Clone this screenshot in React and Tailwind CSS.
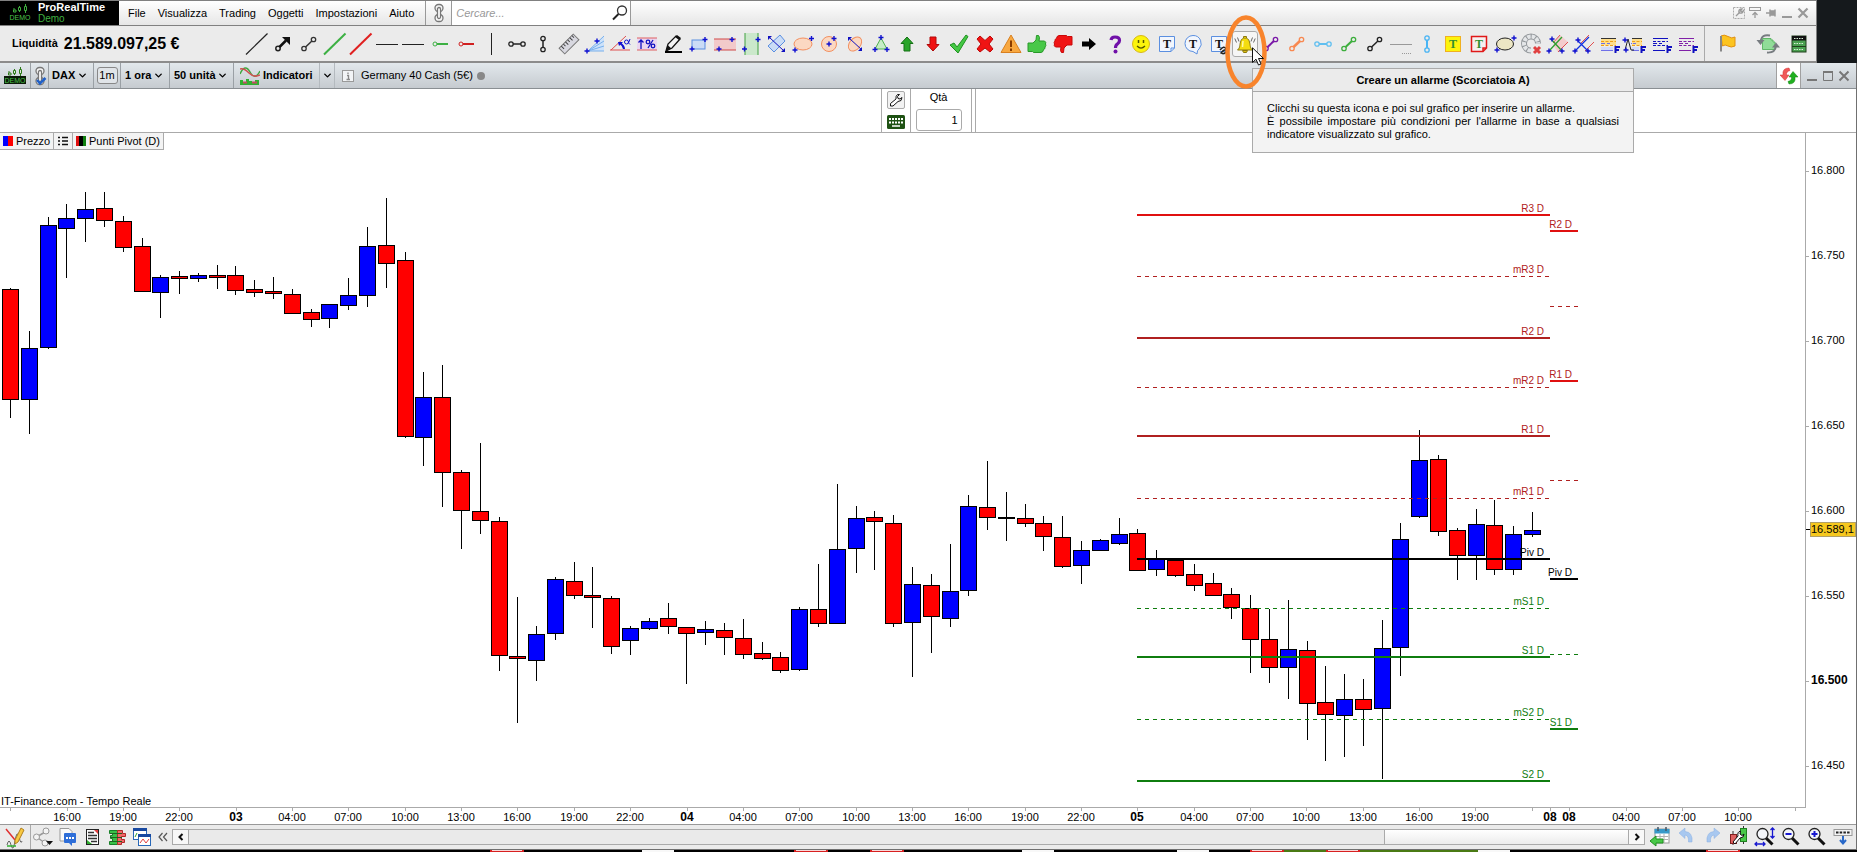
import { useState } from 'react';
import { ChevronDown } from 'lucide-react';

// [color, body top, body bottom, high, low] - one row per hour, in plot units
const candles = [
    ['R', 289, 400, 288, 418], ['B', 348, 400, 331, 434], ['B', 225, 348, 217, 349], ['B', 218, 229, 204, 278],
    ['B', 209, 219, 192, 242], ['R', 208, 221, 192, 227], ['R', 221, 248, 216, 252], ['R', 246, 292, 238, 292],
    ['B', 277, 293, 275, 318], ['R', 276, 279, 271, 294], ['B', 275, 279, 273, 282], ['R', 275, 278, 265, 289],
    ['R', 275, 291, 266, 295], ['R', 289, 293, 280, 297], ['R', 291, 294, 277, 299], ['R', 294, 314, 289, 314],
    ['R', 312, 320, 309, 327], ['B', 304, 319, 304, 328], ['B', 295, 306, 278, 310], ['B', 246, 296, 227, 307],
    ['R', 245, 264, 198, 288], ['R', 260, 437, 252, 438], ['B', 397, 438, 372, 466], ['R', 397, 473, 365, 507],
    ['R', 472, 511, 470, 549], ['R', 511, 521, 443, 534], ['R', 521, 656, 517, 671], ['R', 656, 659, 597, 723],
    ['B', 634, 661, 626, 681], ['B', 579, 634, 577, 640], ['R', 581, 596, 562, 599], ['R', 595, 598, 567, 628],
    ['R', 598, 647, 596, 654], ['B', 628, 641, 626, 655], ['B', 621, 629, 618, 630], ['R', 618, 627, 603, 634],
    ['R', 627, 634, 627, 684], ['B', 629, 633, 621, 645], ['R', 630, 638, 623, 655], ['R', 638, 655, 619, 659],
    ['R', 653, 659, 642, 660], ['R', 657, 671, 652, 673], ['B', 609, 670, 607, 671], ['R', 609, 624, 564, 627],
    ['B', 549, 624, 484, 624], ['B', 518, 549, 506, 573], ['R', 517, 522, 511, 570], ['R', 523, 624, 515, 627],
    ['B', 584, 623, 567, 677], ['R', 585, 617, 574, 653], ['B', 591, 619, 544, 627], ['B', 506, 591, 495, 596],
    ['R', 507, 518, 461, 530], ['R', 517, 518, 492, 541], ['R', 518, 524, 504, 527], ['R', 523, 537, 516, 551],
    ['R', 537, 567, 516, 568], ['B', 550, 566, 541, 584], ['B', 540, 551, 539, 551], ['B', 534, 544, 518, 545],
    ['R', 533, 571, 529, 571], ['B', 559, 570, 550, 576], ['R', 560, 576, 560, 577], ['R', 574, 586, 564, 591],
    ['R', 583, 596, 573, 596], ['R', 594, 608, 588, 619], ['R', 608, 640, 595, 673], ['R', 639, 668, 609, 683],
    ['B', 649, 668, 600, 699], ['R', 650, 704, 641, 740], ['R', 702, 715, 666, 761], ['B', 699, 716, 674, 757],
    ['R', 699, 710, 679, 746], ['B', 648, 709, 620, 779], ['B', 539, 648, 523, 676], ['B', 460, 517, 430, 518],
    ['R', 459, 532, 455, 536], ['R', 530, 556, 528, 580], ['B', 524, 556, 509, 580], ['R', 525, 570, 500, 575],
    ['B', 534, 570, 526, 575], ['B', 530, 535, 512, 537],
];

const RED = '#e01010';
const DARK_RED = '#b02020';
const GREEN = '#0f7d0f';

const pivots = [
    { y: 215, label: 'R3 D', color: RED, text: DARK_RED },
    { y: 276, label: 'mR3 D', color: DARK_RED, dashed: true },
    { y: 338, label: 'R2 D', color: DARK_RED },
    { y: 387, label: 'mR2 D', color: DARK_RED, dashed: true },
    { y: 436, label: 'R1 D', color: DARK_RED },
    { y: 498, label: 'mR1 D', color: DARK_RED, dashed: true },
    { y: 559, label: 'Piv D', color: '#000000' },
    { y: 608, label: 'mS1 D', color: GREEN, dashed: true },
    { y: 657, label: 'S1 D', color: GREEN },
    { y: 719, label: 'mS2 D', color: GREEN, dashed: true },
    { y: 781, label: 'S2 D', color: GREEN },
];

const nextPivots = [
    { y: 231, label: 'R2 D', color: RED, text: DARK_RED },
    { y: 306, color: DARK_RED, dashed: true },
    { y: 381, label: 'R1 D', color: RED, text: DARK_RED },
    { y: 480, color: DARK_RED, dashed: true },
    { y: 579, label: 'Piv D', color: '#000000' },
    { y: 654, color: GREEN, dashed: true },
    { y: 729, label: 'S1 D', color: GREEN },
];

const prices = [
    [171, '16.800'], [256, '16.750'], [341, '16.700'], [426, '16.650'],
    [511, '16.600'], [596, '16.550'], [681, '16.500'], [766, '16.450'],
];

const times = [
    [10, ''], [67, '16:00'], [123, '19:00'], [179, '22:00'], [236, '03'], [292, '04:00'], [348, '07:00'],
    [405, '10:00'], [461, '13:00'], [517, '16:00'], [574, '19:00'], [630, '22:00'], [687, '04'], [743, '04:00'],
    [799, '07:00'], [856, '10:00'], [912, '13:00'], [968, '16:00'], [1025, '19:00'], [1081, '22:00'],
    [1137, '05'], [1194, '04:00'], [1250, '07:00'], [1306, '10:00'], [1363, '13:00'], [1419, '16:00'],
    [1475, '19:00'], [1532, ''], [1550, '08'], [1569, '08'], [1626, '04:00'], [1682, '07:00'], [1738, '10:00'],
    [1795, ''],
];

function Icon({ size = 26, children }) {
    return (
        <svg width={size} height={size} viewBox={`0 0 ${size} ${size}`} fill="none" className="block shrink-0" aria-hidden="true">
            {children}
        </svg>
    );
}

// little blue cross used as anchor point by the drawing tools
function Plus({ x, y }) {
    return <path d={`M${x - 2.5} ${y}H${x + 2.5}M${x} ${y - 2.5}V${y + 2.5}`} stroke="#1010d0" strokeWidth="1.4" />;
}

function Segment({ color, x1 = 8, y1 = 17.5, x2 = 17.5, y2 = 8.5, w = 1.5 }) {
    return (
        <g stroke={color}>
            <path d={`M${x1} ${y1}L${x2} ${y2}`} strokeWidth={w} />
            <circle cx={x1} cy={y1} r="2.2" fill="#ebebeb" strokeWidth="1.3" />
            <circle cx={x2} cy={y2} r="2.2" fill="#ebebeb" strokeWidth="1.3" />
        </g>
    );
}

function FibLines({ top, mid, bottom, dash, x = 5 }) {
    return (
        <>
            {mid && <rect x={x} y="8" width={20 - x} height="6" fill="#ffdf8c" />}
            {mid && <rect x={x} y="16" width={17 - x} height="3" fill="#d4dcfa" />}
            <path d={`M${x} 7.5H20`} stroke={top} />
            <path d={`M${x} 10.5H20M${x} 14.500H20`} stroke={dash} strokeDasharray="3 1.5" />
            <path d={`M${x} 12.500H9M11 12.500H14M${x} 19.500H17`} stroke={bottom} />
            <path d="M19.500 22V16H24M19.500 19H23" stroke="#1010c0" strokeWidth="2" />
        </>
    );
}

const bell = (
    <>
        <path d="M5.500 19C8.500 16.500 7.500 14 8.500 11C9.200 8 11 7 13 7S16.800 8 17.500 11C18.500 14 17.500 16.500 20.500 19Z" fill="#f4dc10" stroke="#8c7a10" />
        <path d="M11.500 7V5.500H14.500V7M10.500 19.500H15.500L14.500 21.500H11.500Z" fill="#e0c010" stroke="#8c7a10" />
        <path d="M11 10L10.500 16" stroke="#fffaa8" strokeWidth="1.500" />
        <path d="M5.500 6.500L7 10.500M2.800 7.500L4.500 11.500M20.500 6.500L19 10.500M23.200 7.500L21.500 11.500" stroke="#666666" />
    </>
);

const thumb = 'M4 12H9L12 9L12.500 4.500Q15 3.500 15.500 6.500L15 10H20.500Q22.500 11 21.500 13Q22.500 14.500 21 16Q21.500 18 19.500 18.500Q19.500 21 17 21.500H9.500L8.500 20.500H4Z';

const tools = [
    ['Linea', <path d="M2 23.500L23.500 2.500" stroke="#222222" strokeWidth="1.200" />],
    ['Freccia', <><circle cx="8" cy="17.500" r="2.200" stroke="#222222" strokeWidth="1.500" /><path d="M9.500 16L16 9.500" stroke="#111111" strokeWidth="2.500" /><path d="M12 6H20V14Z" fill="#111111" /></>],
    ['Segmento', <Segment color="#333333" />],
    ['Trend rialzista', <path d="M2 23.500L23.500 2.500" stroke="#3cb043" strokeWidth="2" />],
    ['Trend ribassista', <path d="M2 23.500L23.500 2.500" stroke="#e02020" strokeWidth="2" />],
    ['Orizzontale', <path d="M2 13.500H24" stroke="#222222" />],
    ['Orizzontale estesa', <path d="M2 13.500H24" stroke="#222222" />],
    ['Semiretta verde', <><path d="M10 13H22" stroke="#3cb043" strokeWidth="2" /><circle cx="9" cy="13" r="2" stroke="#3cb043" fill="#ebebeb" /></>],
    ['Semiretta rossa', <><path d="M10 13H22" stroke="#d02020" strokeWidth="2" /><circle cx="9" cy="13" r="2" stroke="#d02020" fill="#ebebeb" /></>],
    ['Verticale', <path d="M13.500 2V24" stroke="#222222" />],
    ['Segmento orizzontale', <Segment color="#222222" x1={7} y1={13} x2={19} y2={13} />],
    ['Segmento verticale', <Segment color="#222222" x1={13} y1={7.500} x2={13} y2={18.500} />],
    ['Righello', <g transform="rotate(-45 13 13)"><rect x="3" y="9" width="20" height="8" fill="#d8d8e0" stroke="#777777" /><path d="M6 9V13M9 9V12M12 9V13M15 9V12M18 9V13M21 9V12" stroke="#444444" /></g>],
    ['Ventaglio', <><path d="M6 20L22 5V20Z" fill="#cde2fa" /><path d="M6 20L22 5M6 20L22 10M6 20L22 15M6 20H22" stroke="#78b0ec" /><Plus x={5} y={20} /><Plus x={15} y={10} /></>],
    ['Angolo', <><path d="M2 19H22M3 19L18 5" stroke="#e05050" /><path d="M16 18Q16 15 12 12" stroke="#1010d0" strokeWidth="2" /><path d="M10 11H15L11 15Z" fill="#1010d0" /><circle cx="18.500" cy="11" r="2" stroke="#1010d0" /><path d="M22 8L20.500 12L22 13.500" stroke="#1010d0" /></>],
    ['Percentuale', <><rect x="3" y="7" width="20" height="12" fill="#e9d5ef" /><path d="M3 7H23M3 19H23" stroke="#e06060" /><path d="M7 18V9M4.500 11.500L7 9L9.500 11.500" stroke="#1010c0" strokeWidth="1.300" /><circle cx="14" cy="11" r="1.800" stroke="#1010c0" strokeWidth="1.300" /><circle cx="19" cy="15" r="1.800" stroke="#1010c0" strokeWidth="1.300" /><path d="M19 9L14 17" stroke="#1010c0" strokeWidth="1.300" /></>],
    ['Matita', <><path d="M6 20L8 13L16 5L20 8L12 17Z" fill="#f4f4f4" stroke="#111111" strokeWidth="1.300" /><path d="M6 20L7.500 14L11.500 17.500ZM15 6L17 4L21 7L19 9Z" fill="#111111" /><path d="M5 21H22" stroke="#000000" strokeWidth="2" /></>],
    ['Rettangolo', <><rect x="6" y="9" width="13" height="9" fill="#cadcf6" stroke="#5b8fe0" /><Plus x={6} y={18} /><Plus x={19} y={8.500} /></>],
    ['Fascia orizzontale', <><rect x="2" y="8" width="22" height="11" fill="#f2caca" /><path d="M2 8H24M2 19H24" stroke="#d04848" /><Plus x={7} y={18} /><Plus x={20} y={8.500} /></>],
    ['Fascia verticale', <><rect x="7" y="2" width="13" height="22" fill="#cbe8cb" /><path d="M7 2V24M20 2V24" stroke="#40a040" /><Plus x={6.500} y={18} /><Plus x={20} y={8.500} /></>],
    ['Rettangolo inclinato', <><path d="M4 15L16 4L21 10L10 21Z" fill="#cadcf6" stroke="#5b8fe0" /><path d="M5 6L20 20" stroke="#1010c0" /><path d="M4 5H8L4 9ZM21 21H17L21 17Z" fill="#1010c0" /></>],
    ['Ellisse', <><ellipse cx="13" cy="13" rx="9" ry="6" fill="#fbd8c2" stroke="#f29060" /><Plus x={5} y={19} /><Plus x={21.500} y={7.500} /></>],
    ['Cerchio', <><circle cx="13" cy="13" r="7.500" fill="#fbd8c2" stroke="#f29060" /><Plus x={13} y={13} /><Plus x={18} y={7.500} /></>],
    ['Ellisse inclinata', <><ellipse cx="13" cy="13" rx="5.500" ry="8" transform="rotate(40 13 13)" fill="#fbd8c2" stroke="#f29060" /><path d="M7 7L20 19" stroke="#1010c0" /><path d="M6 6H10L6 10ZM20 20H16L20 16Z" fill="#1010c0" /></>],
    ['Triangolo', <><path d="M13 7L19 18H7Z" fill="#c6ecc6" stroke="#50b050" /><Plus x={13} y={6.500} /><Plus x={7} y={18.500} /><Plus x={19} y={18.500} /></>],
    ['Freccia su', <path d="M13 6L19 12.500H16V20H10V12.500H7Z" fill="#2aa52a" stroke="#147014" />],
    ['Freccia giù', <path d="M13 20L19 13.500H16V6H10V13.500H7Z" fill="#f01010" stroke="#b00808" />],
    ['Spunta', <path d="M4 14L8 12L11 16L20 4L22 5.500L12 22Z" fill="#44c844" stroke="#209020" />],
    ['Croce', <path d="M5 8L8 5L13 9.500L18 5L21 8L17 13L21 18L18 21L13 17L8 21L5 18L9 13Z" fill="#f01414" stroke="#c00808" />],
    ['Attenzione', <><path d="M13 4L23 21.500H3Z" fill="#f8a840" stroke="#d88020" strokeLinejoin="round" /><path d="M13 9.500V16M13 17.500V20" stroke="#8a3c00" strokeWidth="2" /></>],
    ['Pollice su', <path d={thumb} fill="#48c848" stroke="#289828" />],
    ['Pollice giù', <g transform="rotate(180 13 13)"><path d={thumb} fill="#f01414" stroke="#c80808" /></g>],
    ['Freccia destra', <path d="M6 10.500H13V7L20 13L13 19V15.500H6Z" fill="#000000" />],
    ['Domanda', <><path d="M9 9Q9.500 6 13 6Q17.500 6 17.500 9.500Q17.500 11.500 15.500 12.800Q13.500 14 13.500 17" stroke="#7010a8" strokeWidth="3.200" /><circle cx="13.500" cy="20.500" r="2" fill="#7010a8" /></>],
    ['Smile', <><circle cx="13" cy="13" r="8.500" fill="#fcf40c" stroke="#d8b818" /><path d="M9 15Q13 19 17 15" stroke="#555500" strokeWidth="1.200" /><path d="M10.500 9V12M15.500 9V12" stroke="#555500" strokeWidth="1.500" /></>],
    ['Testo', <><path d="M5.500 5.500H20.500V17L17 20.500H5.500ZM17 20.500V17H20.500" fill="#f2f6fd" stroke="#5b8fe0" /><TextT /></>],
    ['Fumetto', <><path d="M13 4.500A8 8 0 0 1 19 18Q17 19 17 23L13 20.500A8 8 0 1 1 13 4.500Z" fill="#f2f6fd" stroke="#5b8fe0" /><TextT /></>],
    ['Testo collegato', <><path d="M5.500 5.500H20.500V20.500H5.500Z" fill="#f2f6fd" stroke="#5b8fe0" /><TextT /><path d="M14 19Q18 14 20 18M15 22Q19 17 21 20Q18 24 15 22Z" stroke="#222222" strokeWidth="1.500" /></>],
    ['Creare un allarme', bell],
    ['Segmento viola', <Segment color="#7a18a8" w={2} />],
    ['Segmento arancio', <Segment color="#f88850" w={2.500} />],
    ['Segmento azzurro', <Segment color="#60bff0" x1={7} y1={13} x2={19} y2={13} w={2} />],
    ['Segmento verde', <Segment color="#3cae3c" w={2} />],
    ['Segmento nero', <Segment color="#222222" />],
    ['Linea sottile', <><path d="M2 13.500H24" stroke="#999999" /><path d="M14 22.500H24" stroke="#999999" strokeDasharray="1 1" /></>],
    ['Segmento celeste', <Segment color="#48b4f4" x1={13} y1={7} x2={13} y2={19} w={2} />],
    ['Nota gialla', <><rect x="5.500" y="5.500" width="15" height="15" fill="#fcf40c" stroke="#f0b020" /><TextT color="#309030" /></>],
    ['Nota rossa', <><path d="M5.500 5.500H20.500V17L17 20.500H5.500ZM17 20.500V17H20.500" fill="#f6f0f0" stroke="#e01818" strokeWidth="1.500" /><TextT color="#309030" /></>],
    ['Ellisse 2', <><ellipse cx="13" cy="13" rx="8.500" ry="6" fill="#ece6c4" stroke="#222222" /><Plus x={5} y={19} /><Plus x={22} y={7} /></>],
    ['Ciclo', <><path d="M13 19.500A7 7 0 1 1 20 12.500" stroke="#94989c" strokeWidth="6" /><path d="M13 19.500A7 7 0 1 1 20 12.500" stroke="#e4e6e8" strokeWidth="4" strokeDasharray="3.500 1" /><path d="M16 16L22 22M22 16L16 22" stroke="#e04040" strokeWidth="3" /></>],
    ['Forchetta', <><path d="M9 14L16 4L24 11L14 21Z" fill="#f4cccc" /><path d="M9 12L16 4M14 21L24 11" stroke="#e05050" /><path d="M5 20L18 6M7 8L18 20" stroke="#30a030" strokeWidth="1.300" /><Plus x={5} y={20} /><Plus x={8} y={8} /><Plus x={18} y={20} /></>],
    ['Canale', <><path d="M11 12L19 4M15 20L24 11" stroke="#e05050" /><path d="M5 20L19 6M8 10L18 20" stroke="#1030e0" strokeWidth="1.300" /><Plus x={5} y={20} /><Plus x={8} y={9} /><Plus x={18} y={20} /></>],
    ['Fibonacci', <FibLines top="#333333" mid dash="#f0a018" bottom="#7070e8" />],
    ['Fibonacci esteso', <><FibLines top="#333333" mid dash="#f0a018" bottom="#7070e8" x={10} /><path d="M3 19L6 8L9 19H12" stroke="#222222" /><Plus x={3} y={9} /><Plus x={4} y={19} /></>],
    ['Fibonacci tempo', <FibLines top="#1010c0" dash="#1010c0" bottom="#1010c0" />],
    ['Fibonacci archi', <FibLines top="#8020a8" dash="#8020a8" bottom="#8020a8" />],
];

function TextT({ color = '#111111' }) {
    return (
        <text x="13" y="17" textAnchor="middle" fontSize="12" fontWeight="bold" fill={color} className="font-['Liberation_Serif',serif]">
            T
        </text>
    );
}

function DemoLogo({ boxed }) {
    return (
        <svg width="22" height="18" viewBox="0 0 22 18" fill="none" className="block shrink-0" aria-hidden="true">
            <path d="M5 6V4M4.500 6H7V8H4.500ZM10.500 2V8M16.500 0V9" stroke={boxed ? '#2c7a18' : '#3fae3f'} />
            <path d="M9.500 3.500H11.500V6.500H9.500ZM15.500 2.500H17.500V6.500H15.500Z" stroke={boxed ? '#2c7a18' : '#3fae3f'} fill={boxed ? '#e0e8e0' : '#000000'} />
            {boxed && <rect x="0" y="9" width="22" height="8" fill="#0a1a08" />}
            <text x="11" y="16" textAnchor="middle" fontSize="7" fill="#4cc44c" className="font-['Liberation_Sans',sans-serif]">DEMO</text>
        </svg>
    );
}

function LinkIcon({ checked }) {
    return (
        <svg width="16" height="20" viewBox="0 0 16 20" fill="none" className="block shrink-0" aria-hidden="true">
            <g stroke="#777777" strokeWidth="1.300">
                <rect x="4" y="1.500" width="8" height="7" rx="3.500" fill="#f4f4f4" />
                <rect x="4" y="11.500" width="8" height="7" rx="3.500" fill="#f4f4f4" />
                <rect x="6.500" y="4.500" width="3" height="11" rx="1.500" fill="#ffffff" />
            </g>
            {checked && <path d="M5 14L8 17.500L13.500 12" stroke="#2060c8" strokeWidth="2.500" />}
        </svg>
    );
}

function MiniSelect({ label, value, className, chevron = true }) {
    return (
        <label className="relative flex h-full items-center border-r border-[#9aa0a5]">
            <select aria-label={label} className={`h-full cursor-pointer appearance-none bg-transparent text-[11px] font-bold outline-none ${className}`}>
                <option>{value}</option>
            </select>
            {chevron && <ChevronDown size={11} strokeWidth={3} className="pointer-events-none absolute right-[5px]" />}
        </label>
    );
}

function AlarmTooltip() {
    return (
        <>
            <svg width="42" height="74" viewBox="0 0 42 74" fill="none" className="pointer-events-none absolute -top-4 -left-[7px] z-30" aria-hidden="true">
                <ellipse cx="21" cy="37" rx="18.500" ry="34.500" stroke="#f8842c" strokeWidth="4.500" />
            </svg>
            <svg width="13" height="19" viewBox="0 0 13 19" className="pointer-events-none absolute top-4 left-5 z-30" aria-hidden="true">
                <path d="M.5 .8V15.500L4 12.200L6.500 18L9 17L6.500 11.500H11.500Z" fill="#ffffff" stroke="#111111" />
            </svg>
            <div role="tooltip" className="absolute top-[37px] left-5 z-20 w-[382px] cursor-default border border-[#aaaaaa] bg-[#f3f3f3] text-[11px]">
                <div className="border-b border-[#aaaaaa] bg-[#ebebeb] text-center leading-[22px] font-bold">
                    Creare un allarme (Scorciatoia A)
                </div>
                <div className="px-[14px] pt-[10px] pb-[11px] text-left leading-[13px]">
                    <p>Clicchi su questa icona e poi sul grafico per inserire un allarme.</p>
                    <p className="text-justify">
                        È possibile impostare più condizioni per l'allarme in base a qualsiasi indicatore visualizzato sul grafico.
                    </p>
                </div>
            </div>
        </>
    );
}

function MenuBar() {
    return (
        <div className="flex h-[26px] items-stretch border-t border-b border-[#808080] bg-gradient-to-b from-white to-[#e6e6e6]">
            <div className="flex w-[119px] items-center bg-black pl-[9px]">
                <DemoLogo />
                <div className="pl-[7px] leading-[11px]">
                    <div className="text-[11px] font-bold text-white">ProRealTime</div>
                    <div className="text-[10px] text-[#3fae3f]">Demo</div>
                </div>
            </div>
            <nav className="flex items-center gap-3 border-r border-[#999999] pr-[11px] pl-[9px]">
                {['File', 'Visualizza', 'Trading', 'Oggetti', 'Impostazioni', 'Aiuto'].map((item) => (
                    <button key={item} type="button" className="text-[11px]">{item}</button>
                ))}
            </nav>
            <button type="button" aria-label="Collega" className="flex w-[26px] items-center justify-center border-r border-[#999999]">
                <LinkIcon />
            </button>
            <div className="flex w-[179px] items-center border-r border-[#999999] bg-white">
                <input aria-label="Cercare" placeholder="Cercare..." className="min-w-0 flex-1 pl-1 text-[11px] italic outline-none placeholder:text-[#999999]" />
                <Icon size={20}>
                    <circle cx="12" cy="7.500" r="4.500" stroke="#333333" strokeWidth="1.300" />
                    <path d="M8.500 11L3 16.500" stroke="#222222" strokeWidth="2" />
                </Icon>
            </div>
            <div className="ml-auto flex items-center pr-[5px]">
                <button type="button" aria-label="Configura">
                    <Icon size={16}>
                        <rect x="2.500" y="2.500" width="11" height="11" stroke="#aaaaaa" strokeDasharray="2 1" />
                        <path d="M5 11L9 7M8 8Q7 4 11 4L9.500 6L11 7L12.500 5.500Q12 9 8 8" stroke="#999999" strokeWidth="1.300" />
                    </Icon>
                </button>
                <button type="button" aria-label="Mostra">
                    <Icon size={16}>
                        <rect x="2.500" y="2.500" width="11" height="3" stroke="#999999" />
                        <path d="M8 13V8M5.500 10L8 7.500L10.500 10" stroke="#999999" strokeWidth="1.300" />
                    </Icon>
                </button>
                <button type="button" aria-label="Fissa">
                    <Icon size={16}>
                        <path d="M3 8H7M7 4.500V11.500M7 6H12V10H7M12 4.500V11.500" fill="#999999" stroke="#999999" strokeWidth="1.500" />
                    </Icon>
                </button>
                <button type="button" aria-label="Riduci">
                    <Icon size={16}><path d="M3 12H13" stroke="#999999" strokeWidth="2" /></Icon>
                </button>
                <button type="button" aria-label="Chiudi">
                    <Icon size={16}><path d="M3.500 3.500L12.500 12.500M12.500 3.500L3.500 12.500" stroke="#999999" strokeWidth="2.200" /></Icon>
                </button>
            </div>
        </div>
    );
}

function DrawingBar() {
    return (
        <div className="flex h-[37px] items-center border-b-2 border-[#8c8c8c] bg-[#ebebeb]">
            <div className="flex w-[244px] shrink-0 items-center gap-[6px] pl-3 font-bold">
                <span className="text-[11px]">Liquidità</span>
                <span className="text-[16px] leading-4">21.589.097,25 €</span>
            </div>
            {tools.map(([name, drawing]) =>
                name === 'Creare un allarme' ? (
                    <div key={name} className="relative">
                        <button type="button" aria-label={name} className="block rounded-[3px] bg-[#f6f6f6] outline outline-1 -outline-offset-1 outline-[#aaaaaa]">
                            <Icon>{drawing}</Icon>
                        </button>
                        <AlarmTooltip />
                    </div>
                ) : (
                    <button key={name} type="button" aria-label={name}>
                        <Icon>{drawing}</Icon>
                    </button>
                )
            )}
            <div className="ml-1 flex h-full items-center border-l border-[#aaaaaa] pl-[9px]">
                <button type="button" aria-label="Bandiera">
                    <Icon>
                        <path d="M7 5Q10 3 14 5.500T21 6V15Q17 17 14 15T8.500 15Z" fill="#fcc420" stroke="#e09010" />
                        <path d="M7 5V20.500" stroke="#888888" strokeWidth="2" />
                    </Icon>
                </button>
                <button type="button" aria-label="Ricarica" className="ml-[15px]">
                    <Icon>
                        <path d="M7.500 7.500H16V9H18V11H20V18.500H7.500Z" fill="#90dc98" stroke="#60b868" />
                        <path d="M15 4.500Q6.500 3 5.500 10M12 21.500Q20.500 22 21 15" stroke="#777c80" strokeWidth="1.800" />
                        <path d="M1.500 9H9.500L5.500 14ZM17 16.500H25L21 11.500Z" fill="#777c80" />
                    </Icon>
                </button>
                <button type="button" aria-label="Elenco" className="mr-[5px] ml-[5px]">
                    <Icon>
                        <rect x="6" y="5" width="14" height="16" fill="#4aa050" stroke="#20401c" />
                        <rect x="6" y="5" width="14" height="4.500" fill="#111111" />
                        <path d="M6 15.500H20" stroke="#20401c" />
                        <path d="M8 7.500H17M8 12.500H17M8 18.500H17" stroke="#d8f0d8" strokeDasharray="1.500 1" />
                    </Icon>
                </button>
            </div>
        </div>
    );
}

function ChartBar() {
    return (
        <div className="flex h-[26px] items-stretch border-b border-[#8a8f93] bg-gradient-to-b from-[#e2e8ec] to-[#c6cbd0]">
            <div className="flex w-[31px] items-center border-r border-[#9aa0a5] pl-1">
                <DemoLogo boxed />
            </div>
            <button type="button" aria-label="Collega grafico" className="flex w-[18px] items-center justify-center border-r border-[#9aa0a5]">
                <LinkIcon checked />
            </button>
            <MiniSelect label="Titolo" value="DAX" className="w-[44px] pl-[3px]" />
            <div className="flex w-[27px] items-center justify-center border-r border-[#9aa0a5]">
                <button type="button" className="h-[17px] w-[21px] rounded-[3px] border border-[#888888] bg-[#e0e4e8] text-[11px] leading-[15px]">1m</button>
            </div>
            <MiniSelect label="Periodo" value="1 ora" className="w-[48px] pl-1" />
            <MiniSelect label="Quantità dati" value="50 unità" className="w-[63px] pl-1" />
            <button type="button" className="flex w-[86px] items-center gap-[3px] border-r border-[#b4babf] pl-[6px] text-[11px] font-bold">
                <Icon size={20}>
                    <path d="M0 8Q5 -3 10 6T20 5" stroke="#40a840" strokeWidth="1.500" />
                    <path d="M0 3Q4 2 9 7T20 9" stroke="#d05050" strokeWidth="1.500" />
                    <path d="M0 19V14H3V16H6V13H9V15H12V16H15V14H19V19Z" fill="#30b030" />
                    <path d="M3 16.500H7M12 16.500H17" stroke="#c05060" strokeWidth="2" />
                </Icon>
                Indicatori
            </button>
            <button type="button" aria-label="Altri indicatori" className="flex w-[15px] items-center justify-center border-r border-[#b4babf]">
                <ChevronDown size={11} strokeWidth={3} />
            </button>
            <div className="flex items-center pl-[7px] text-[11px]">
                <Icon size={12}>
                    <rect x=".5" y=".5" width="11" height="11" fill="#f2f4f6" stroke="#999999" />
                    <path d="M5 5.500H6.500V9M4.500 9.500H8M6 2.500V4" stroke="#888888" strokeWidth="1.300" />
                </Icon>
                <span className="pl-[7px]">Germany 40 Cash (5€)</span>
                <span className="ml-1 size-2 rounded-full bg-[#888888]" />
            </div>
            <div className="ml-auto flex items-center pr-1">
                <button type="button" aria-label="Aggiorna" className="mr-[3px] flex h-full w-[25px] items-center justify-center border-x border-[#a0a0a0] bg-white">
                    <Icon size={20}>
                        <path d="M10 2Q3 2 4 9H1L6 14.500L10 9H7.500Q7 5.500 11 4.500Z" fill="#f05858" stroke="#d03030" strokeWidth="0.500" />
                        <path d="M10 18Q17 18 16 11H19L14 5.500L10 11H12.500Q13 14.500 9 15.500Z" fill="#20b020" stroke="#108010" strokeWidth="0.500" />
                    </Icon>
                </button>
                <button type="button" aria-label="Riduci grafico">
                    <Icon size={16}><path d="M3 12H13" stroke="#777777" strokeWidth="2" /></Icon>
                </button>
                <button type="button" aria-label="Ingrandisci">
                    <Icon size={16}><path d="M3.500 4H12.500V12.500H3.500Z" stroke="#777777" /><path d="M3 4H13" stroke="#777777" strokeWidth="2" /></Icon>
                </button>
                <button type="button" aria-label="Chiudi grafico">
                    <Icon size={16}><path d="M3.500 3.500L12.500 12.500M12.500 3.500L3.500 12.500" stroke="#777777" strokeWidth="2" /></Icon>
                </button>
            </div>
        </div>
    );
}

function OrderRow() {
    const [qty, setQty] = useState('1');

    return (
        <div className="flex h-[44px] justify-center border-b border-[#aaaaaa]">
            <div className="flex w-[30px] flex-col items-center gap-[6px] border-x border-[#aaaaaa] pt-[2px]">
                <button type="button" aria-label="Impostazioni ordine" className="rounded-[2px] border border-[#aaaaaa] bg-[#f2f2f2]">
                    <Icon size={16}>
                        <path d="M9.500 2.500Q7.500 4 8 7L2.500 11.500V14H5L10 9.500Q14 9.500 14 5.500L12 7L10 6.500L9.500 4.500L11.500 2.500Z" fill="#ffffff" stroke="#111111" />
                    </Icon>
                </button>
                <button type="button" aria-label="Tastiera">
                    <svg width="18" height="14" viewBox="0 0 18 14" className="block">
                        <rect width="18" height="14" rx="1.500" fill="#1f5214" />
                        <path d="M2 4H16M2 7.500H16" stroke="#ffffff" strokeWidth="2" strokeDasharray="2 1" />
                        <path d="M5 11H13" stroke="#ffffff" strokeWidth="1.500" />
                    </svg>
                </button>
            </div>
            <label className="flex w-[61px] flex-col items-center gap-[5px] border-r border-[#aaaaaa] pt-px pr-1 text-[11px] leading-[14px]">
                Qtà
                <input value={qty} onChange={(e) => setQty(e.target.value)} className="h-[22px] w-[46px] rounded-[3px] border border-[#aaaaaa] pr-[3px] text-right outline-none" />
            </label>
            <div className="w-[4px] border-r border-[#aaaaaa]" />
        </div>
    );
}

function PivotLine({ x1, x2, pivot, labelX }) {
    return (
        <g>
            <path
                d={`M${x1} ${pivot.dashed ? pivot.y + 0.5 : pivot.y}H${x2}`}
                stroke={pivot.color}
                strokeWidth={pivot.dashed ? 1 : 2}
                strokeDasharray={pivot.dashed ? '4 4' : undefined}
            />
            {pivot.label && (
                <text x={labelX} y={pivot.y - 3} textAnchor="end" fontSize="10" fill={pivot.text || pivot.color}>{pivot.label}</text>
            )}
        </g>
    );
}

function Chart() {
    return (
        <div className="relative">
            <svg viewBox="0 133 1856 691" className="block h-auto w-full font-['Liberation_Sans',Arial,sans-serif]" fill="none" shapeRendering="crispEdges" role="img" aria-label="DAX 1 ora">
                {candles.map(([color, top, bottom, high, low], i) => {
                    const x = Math.round(10 + i * 18.79);
                    return (
                        <g key={i} stroke="#000000">
                            <path d={`M${x + 0.5} ${high}V${low}`} />
                            <rect x={x - 7.5} y={top + 0.5} width="16" height={Math.max(bottom - top - 1, 1)} fill={color === 'R' ? '#ff0000' : '#0000ff'} />
                        </g>
                    );
                })}
                {pivots.map((pivot) => <PivotLine key={pivot.label} x1={1137} x2={1550} pivot={pivot} labelX={1544} />)}
                {nextPivots.map((pivot) => <PivotLine key={pivot.y} x1={1550} x2={1578} pivot={pivot} labelX={1572} />)}

                <path d="M0 807.500H1805.500V133" stroke="#aaaaaa" />
                {prices.map(([y, label]) => (
                    <g key={label}>
                        <path d={`M1806 ${y + 0.5}H1809`} stroke="#aaaaaa" />
                        <text x="1811" y={y + 3} fontSize={label === '16.500' ? 12 : 11} fontWeight={label === '16.500' ? 'bold' : 'normal'} fill="#000000">{label}</text>
                    </g>
                ))}
                <path d="M1806 529.500H1810" stroke="#000000" />
                <rect x="1810.500" y="522.500" width="45" height="14" fill="#f6c81e" stroke="#b0a068" />
                <text x="1811" y="533" fontSize="11" fill="#000000">16.589,1</text>

                {times.map(([x, label]) => (
                    <g key={x}>
                        <path d={`M${x + 0.5} 808V811`} stroke="#aaaaaa" />
                        <text x={x} y="821" textAnchor="middle" fontSize={label.length === 2 ? 12 : 11} fontWeight={label.length === 2 ? 'bold' : 'normal'} fill="#000000">{label}</text>
                    </g>
                ))}
                <text x="1" y="805" fontSize="11" fill="#000000">IT-Finance.com - Tempo Reale</text>
            </svg>
            <div className="absolute top-0 left-0 flex h-[17px] border-b border-[#aaaaaa] bg-[#f3f3f3] text-[11px] whitespace-nowrap">
                <button type="button" className="flex w-[54px] items-center gap-[3px] border-r border-[#aaaaaa] pl-[3px]">
                    <Icon size={10}><rect width="5" height="10" fill="#0000ff" /><rect x="5" width="5" height="10" fill="#ff0000" /></Icon>
                    Prezzo
                </button>
                <button type="button" aria-label="Elenco indicatori" className="flex w-[19px] items-center justify-center border-r border-[#aaaaaa]">
                    <Icon size={10}><path d="M0 1.500H2M4 1.500H10M0 5H2M4 5H10M0 8.500H2M4 8.500H10" stroke="#111111" strokeWidth="1.300" /></Icon>
                </button>
                <button type="button" className="flex items-center gap-[3px] border-r border-[#aaaaaa] px-[3px]">
                    <Icon size={10}><rect width="3" height="10" fill="#e01010" /><rect x="3" width="4" height="10" fill="#000000" /><rect x="7" width="3" height="10" fill="#108010" /></Icon>
                    Punti Pivot (D)
                </button>
            </div>
        </div>
    );
}

function Magnifier({ children }) {
    return (
        <>
            <path d="M13.500 13.500L20.500 20.500" stroke="#111111" strokeWidth="3" />
            <circle cx="10.500" cy="10" r="5.500" fill="#f4f6fa" stroke="#222222" strokeWidth="1.300" />
            {children}
        </>
    );
}

const chartTools = [
    ['Calendario', <><rect x="7" y="5" width="14" height="14" fill="#ffffff" stroke="#999999" /><rect x="6.500" y="5" width="15" height="4.500" fill="#3898c8" /><path d="M10 3V7M18 3V7" stroke="#445566" strokeWidth="1.500" /><path d="M8 12.500H20M8 15.500H20M12 10V19M16 10V19" stroke="#b0b0b0" /><path d="M2 17L8 12V15H15V19H8V22Z" fill="#48c848" stroke="#209020" /></>],
    ['Annulla', <path d="M5 9L11 4V7.500Q19 8 18 18H14.500Q15 11.500 11 11V14.500Z" fill="#a8c8f0" stroke="#88aee0" strokeWidth="0.500" />],
    ['Ripeti', <path d="M20 9L14 4V7.500Q6 8 7 18H10.500Q10 11.500 14 11V14.500Z" fill="#a8c8f0" stroke="#88aee0" strokeWidth="0.500" />],
    ['Stile grafico', <><path d="M7 7V21M17.500 2V20" stroke="#333333" /><rect x="4.500" y="10.500" width="6" height="9" fill="#e06060" stroke="#802020" /><rect x="14.500" y="4.500" width="6" height="13" fill="#48c848" stroke="#208020" /><path d="M7 18L12 12Q11 8 14.500 7L14 10L16 11.500L18 10Q18 14 14 14L9 20Z" fill="#ffffff" stroke="#111111" /></>],
    ['Zoom completo', <><Magnifier /><path d="M20.500 4V14M18.500 6L20.500 4L22.500 6M18.500 12L20.500 14L22.500 12M3 20H13M5 18L3 20L5 22M11 18L13 20L11 22" stroke="#1818d0" strokeWidth="1.300" /></>],
    ['Zoom indietro', <Magnifier><path d="M7.500 10H13.500" stroke="#1818d0" strokeWidth="2" /></Magnifier>],
    ['Zoom avanti', <Magnifier><path d="M7.500 10H13.500M10.500 7V13" stroke="#1818d0" strokeWidth="2" /></Magnifier>],
    ['Barra rapida', <><rect x="4" y="5.500" width="18" height="6" fill="#f4f4f4" stroke="#999999" /><path d="M6 8.500H20" stroke="#222222" strokeWidth="2" strokeDasharray="2.500 1.200" /><path d="M13 12V19M10 16L13 19.500L16 16" stroke="#2868c8" strokeWidth="2" /></>],
];

function BottomBar() {
    return (
        <div className="flex h-[25px] items-center border-t border-[#999999] bg-[#ebebeb]">
            <button type="button" aria-label="Disegna" className="flex w-[31px] items-center justify-center border-r border-[#aaaaaa]">
                <Icon size={24}>
                    <path d="M4 20Q6 12 8 20T12 16T16 12T19 16" stroke="#666666" />
                    <path d="M3 4L12 15M12 15L18 10" stroke="#e03030" strokeWidth="1.500" />
                    <path d="M4 21H13" stroke="#30b030" strokeWidth="1.500" />
                    <path d="M18 3L21 5L15 17L12 19L12 15Z" fill="#f8c840" stroke="#b08020" />
                </Icon>
            </button>
            <button type="button" aria-label="Condividi">
                <Icon size={24}>
                    <path d="M5.500 12L15 6.500M5.500 12L14 18" stroke="#999999" strokeWidth="1.500" />
                    <circle cx="5.500" cy="12" r="3" fill="#f4f4f4" stroke="#999999" />
                    <circle cx="15" cy="6" r="3" fill="#f4f4f4" stroke="#999999" />
                    <circle cx="14" cy="18" r="3" fill="#f4f4f4" stroke="#999999" />
                    <path d="M15 16H22L18.500 20Z" fill="#111111" />
                </Icon>
            </button>
            <div className="flex items-center gap-px">
                <button type="button" aria-label="Commenti">
                    <Icon size={24}>
                        <path d="M5 3.500H14L17 6.500V16H5Z" fill="#fafafa" stroke="#999999" />
                        <path d="M10 8H20Q21 8 21 9V17Q21 18 20 18H17V21L14 18H10Q9 18 9 17V9Q9 8 10 8Z" fill="#2e6ed8" />
                        <path d="M11 13H19" stroke="#ffffff" strokeWidth="2" strokeDasharray="2 1" />
                    </Icon>
                </button>
                <button type="button" aria-label="Rapporto">
                    <Icon size={24}>
                        <rect x="6.500" y="4.500" width="12" height="15" fill="#fcfcfc" stroke="#222222" />
                        <path d="M8 7.500H14M8 10.500H17M8 13.500H17M11 16.500H17" stroke="#333333" strokeWidth="1.300" />
                        <path d="M14 5H18V9Z" fill="#e04040" />
                        <path d="M7 15L12 19H7Z" fill="#30b030" />
                    </Icon>
                </button>
                <button type="button" aria-label="Book">
                    <Icon size={24}>
                        <path d="M4.500 5.500H12.500V19.500H4.500V16.500H7.500V13.500H5.500V10.500H7.500V8.500H4.500Z" fill="#38c048" stroke="#188028" />
                        <path d="M12.500 5.500H17.500V8.500H20.500V11.500H16.500V14.500H19.500V17.500H16.500V19.500H12.500Z" fill="#f06868" stroke="#b02828" />
                        <path d="M5 8.500H17M5 12.500H17M5 16.500H17" stroke="#206020" />
                    </Icon>
                </button>
                <button type="button" aria-label="Finestre">
                    <Icon size={24}>
                        <rect x="3.500" y="3.500" width="13" height="11" fill="#ffffff" stroke="#2868b8" /><path d="M3 4.500H17" stroke="#1848a0" strokeWidth="3" />
                        <rect x="8.500" y="9.500" width="12" height="11" fill="#ffffff" stroke="#2868b8" /><path d="M8 10.500H21" stroke="#1848a0" strokeWidth="3" />
                        <path d="M10 18L13 14L16 18L19 14" stroke="#e04040" /><path d="M5 12L7 8" stroke="#30a030" />
                    </Icon>
                </button>
            </div>
            <button type="button" aria-label="Comprimi" className="ml-1">
                <Icon size={10}><path d="M4.500 1L1 5L4.500 9M9 1L5.500 5L9 9" stroke="#555555" strokeWidth="1.200" /></Icon>
            </button>
            <div className="ml-1 flex h-[16px] flex-1 border border-[#aaaaaa] bg-[#eaeaea]">
                <button type="button" aria-label="Indietro" className="flex w-[16px] items-center justify-center border-r border-[#aaaaaa] bg-[#f8f8f8]">
                    <Icon size={8}><path d="M5.500 1L2.500 4L5.500 7" stroke="#111111" strokeWidth="2" /></Icon>
                </button>
                <div className="flex flex-1 justify-end">
                    <div className="w-[17%] border-x border-[#aaaaaa] bg-gradient-to-b from-white to-[#ececec]" />
                </div>
                <button type="button" aria-label="Avanti" className="flex w-[15px] items-center justify-center bg-[#f8f8f8]">
                    <Icon size={8}><path d="M2.500 1L5.500 4L2.500 7" stroke="#111111" strokeWidth="2" /></Icon>
                </button>
            </div>
            <div className="flex pl-[3px]">
                {chartTools.map(([name, drawing]) => (
                    <button key={name} type="button" aria-label={name}><Icon>{drawing}</Icon></button>
                ))}
            </div>
        </div>
    );
}

// sliver of the desktop visible below the window
function Desktop() {
    return (
        <svg viewBox="0 0 1857 3" preserveAspectRatio="none" className="block h-[3px] w-full bg-black" aria-hidden="true">
            <rect x="1284" width="194" height="3" fill="#4a7a14" />
            {[642, 1022, 1177, 1478].map((x) => <rect key={x} x={x} width="32" height="3" fill="#f8f8f8" />)}
            {[490, 794, 870, 1250, 1326, 1706].map((x) => (
                <g key={x}>
                    <rect x={x} width="34" height="3" fill="#d82020" />
                    <rect x={x + 2} width="30" height="1" fill="#f8d8d8" />
                </g>
            ))}
        </svg>
    );
}

export default function App() {
    return (
        <div className="bg-black font-['Liberation_Sans',Arial,sans-serif] text-black">
            <div className="flex bg-[#15191c]">
                <div className="min-w-0 flex-1 border-r border-[#808080]">
                    <MenuBar />
                    <DrawingBar />
                </div>
                <div className="w-10 shrink-0" />
            </div>
            <div className="border-r border-b border-[#707070] bg-white">
                <ChartBar />
                <OrderRow />
                <Chart />
                <BottomBar />
            </div>
            <Desktop />
        </div>
    );
}
